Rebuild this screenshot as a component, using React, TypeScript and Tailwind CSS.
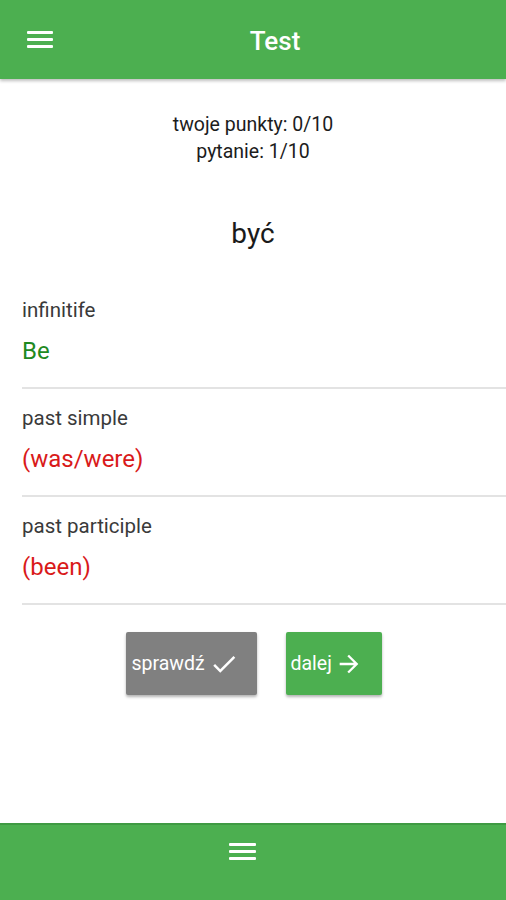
import React from "react";

function Burger({ className }: { className?: string }) {
  return (
    <div className={"flex flex-col justify-between " + (className ?? "")}>
      <div className="h-[3px] w-full rounded-[1px] bg-white" />
      <div className="h-[3px] w-full rounded-[1px] bg-white" />
      <div className="h-[3px] w-full rounded-[1px] bg-white" />
    </div>
  );
}

function Section({ label, value, color, first }: { label: string; value: string; color: string; first?: boolean }) {
  return (
    <div className={"ml-[22px] border-b-2 border-[#e3e3e3] pb-[22px] " + (first ? "pt-0" : "pt-[17px]")}>
      <div className="h-[24px] text-[20.5px] leading-[24px] text-[#3a3a3a]">{label}</div>
      <div className={"mt-[15px] h-[28px] text-[24px] leading-[28px] " + color}>{value}</div>
    </div>
  );
}

export default function App() {
  return (
    <div
      className="flex min-h-[900px] w-full flex-col bg-white"
      style={{ fontFamily: "Roboto, 'Noto Sans', sans-serif" }}
    >
      <header className="relative z-10 flex h-[79px] items-center bg-[#4caf50] shadow-[0_2px_3px_rgba(0,0,0,0.25)]">
        <Burger className="ml-[27px] h-[17px] w-[26px]" />
        <div className="mt-[4px] mr-[9px] flex-1 text-center text-[26px] font-medium text-white">Test</div>
      </header>

      <main className="flex-1">
        <div className="pt-[32px] text-center text-[19.5px] leading-[27px] text-[#1c1c1c]">
          <div>twoje punkty: 0/10</div>
          <div>pytanie: 1/10</div>
        </div>
        <div className="mt-[51px] text-center text-[28px] leading-[36px] text-[#1a1a1a]">być</div>
        <div className="mt-[46px]">
          <Section label="infinitife" value="Be" color="text-[#1f8a1f]" first />
          <Section label="past simple" value="(was/were)" color="text-[#d91a1a]" />
          <Section label="past participle" value="(been)" color="text-[#d91a1a]" />
        </div>
        <div className="mt-[27px] flex justify-center gap-[29px] pl-[1px]">
          <button className="flex h-[63px] w-[131px] items-center gap-[4px] rounded-[2px] bg-[#808080] pl-[6px] text-[19.5px] text-white shadow-[0_2px_3px_rgba(0,0,0,0.3)]">
            <span>sprawdź</span>
            <svg width="30" height="30" viewBox="0 0 24 24" fill="white">
              <path d="M9 16.17L4.83 12l-1.42 1.41L9 19 21 7l-1.41-1.41z" />
            </svg>
          </button>
          <button className="flex h-[63px] w-[96px] items-center gap-[3px] rounded-[2px] bg-[#4caf50] pl-[5px] text-[19.5px] text-white shadow-[0_2px_3px_rgba(0,0,0,0.3)]">
            <span>dalej</span>
            <svg width="28" height="28" viewBox="0 0 24 24" fill="white">
              <path d="M12 4l-1.41 1.41L16.17 11H4v2h12.17l-5.58 5.59L12 20l8-8z" />
            </svg>
          </button>
        </div>
      </main>

      <footer className="flex h-[77px] items-center justify-center border-t-2 border-[#3f9a43] bg-[#4caf50]">
        <div className="mr-[22px] mb-[22px]">
          <Burger className="h-[17px] w-[27px]" />
        </div>
      </footer>
    </div>
  );
}
